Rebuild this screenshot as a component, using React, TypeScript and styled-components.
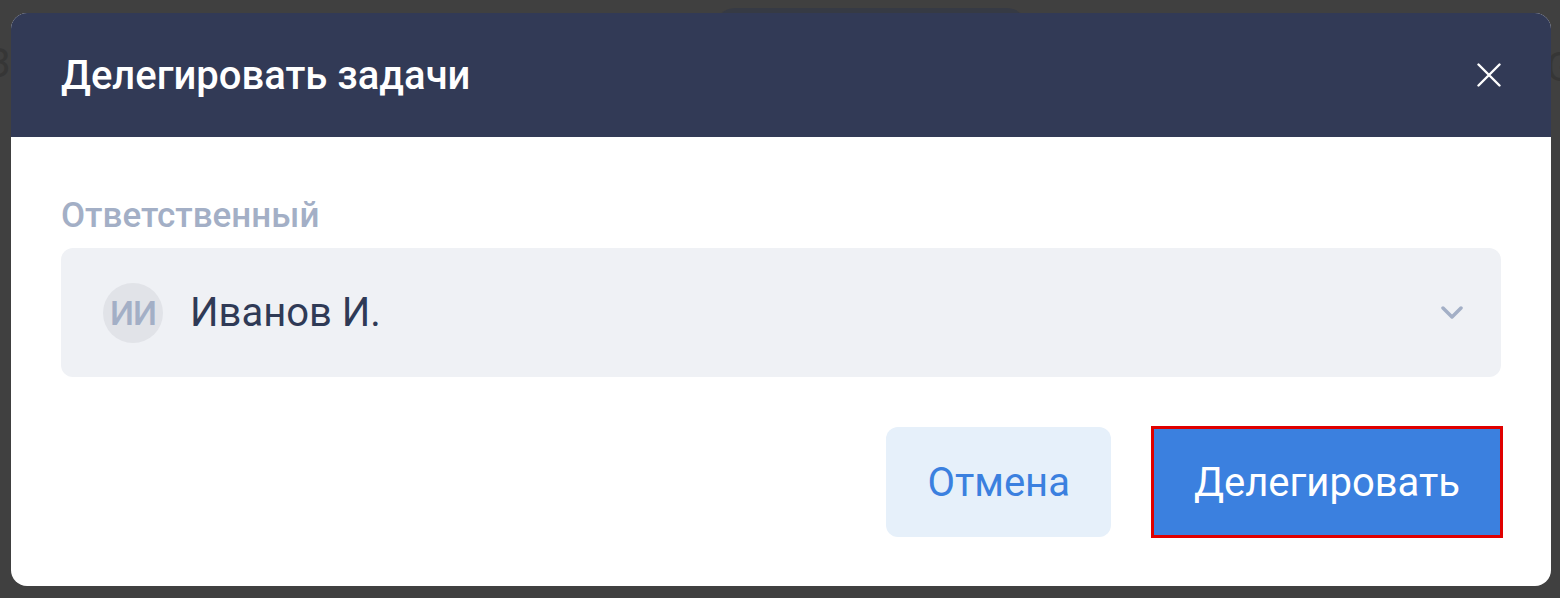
import React from "react";
import styled, { createGlobalStyle } from "styled-components";

const Global = createGlobalStyle`
  html, body { margin: 0; padding: 0; }
  body {
    background: #404040;
    font-family: Roboto, "Noto Sans", "Liberation Sans", sans-serif;
    -webkit-font-smoothing: antialiased;
  }
`;

const Page = styled.div`
  position: relative;
  width: 1560px;
  height: 598px;
  overflow: hidden;
  background: #404040;
`;

const Backdrop = styled.div`
  position: absolute;
  inset: 0;
  pointer-events: none;
`;

const GhostPill = styled.div`
  position: absolute;
  left: 715px;
  top: 8px;
  width: 312px;
  height: 40px;
  border-radius: 20px;
  background: #363a44;
`;

const GhostText = styled.span<{ $left: number; $top: number }>`
  position: absolute;
  left: ${(p) => p.$left}px;
  top: ${(p) => p.$top}px;
  font-size: 40px;
  color: #363636;
  line-height: 1;
`;

const Overlay = styled.div`
  position: absolute;
  inset: 0;
  display: flex;
  align-items: flex-start;
  padding: 13px 0 0 11px;
`;

const Modal = styled.div`
  width: 1540px;
  height: 573px;
  background: #ffffff;
  border-radius: 16px;
  overflow: hidden;
  display: flex;
  flex-direction: column;
`;

const Header = styled.header`
  height: 124px;
  flex-shrink: 0;
  background: #323a56;
  display: flex;
  align-items: center;
  justify-content: space-between;
  padding: 0 42px 0 50px;
  box-sizing: border-box;
`;

const Title = styled.h2`
  margin: 0;
  font-size: 40px;
  font-weight: 500;
  color: #ffffff;
  letter-spacing: 0;
`;

const CloseButton = styled.button`
  width: 40px;
  height: 40px;
  border: none;
  background: transparent;
  padding: 0;
  display: flex;
  align-items: center;
  justify-content: center;
  cursor: pointer;
`;

const Body = styled.div`
  padding: 59px 50px 0 50px;
  display: flex;
  flex-direction: column;
`;

const Label = styled.label`
  font-size: 35px;
  font-weight: 500;
  color: #a3afc6;
  line-height: 40px;
  margin-bottom: 12px;
`;

const Select = styled.div`
  height: 129px;
  border-radius: 12px;
  background: #eff1f5;
  display: flex;
  align-items: center;
  padding: 0 38px 0 42px;
  box-sizing: border-box;
`;

const Avatar = styled.div`
  width: 60px;
  height: 60px;
  border-radius: 50%;
  background: #e1e3e8;
  color: #a3afc6;
  font-size: 34px;
  font-weight: 500;
  letter-spacing: -1px;
  display: flex;
  align-items: center;
  justify-content: center;
  flex-shrink: 0;
`;

const Name = styled.span`
  margin-left: 27px;
  font-size: 40px;
  color: #2f3a56;
  flex: 1;
`;

const Actions = styled.div`
  display: flex;
  justify-content: flex-end;
  gap: 40px;
  margin-top: 49px;
  margin-right: -2px;
`;

const Button = styled.button<{ $primary?: boolean }>`
  height: ${(p) => (p.$primary ? "112px" : "110px")};
  margin-top: ${(p) => (p.$primary ? "0" : "1px")};
  padding: 0 ${(p) => (p.$primary ? "40px" : "41px")};
  font-family: inherit;
  font-size: 40px;
  font-weight: 400;
  border-radius: ${(p) => (p.$primary ? "0" : "12px")};
  border: ${(p) => (p.$primary ? "3px solid #e00000" : "none")};
  background: ${(p) => (p.$primary ? "#3b80df" : "#e6f0fa")};
  color: ${(p) => (p.$primary ? "#ffffff" : "#3b80df")};
  cursor: pointer;
  box-sizing: border-box;
`;

export default function App() {
  return (
    <>
      <Global />
      <Page>
        <Backdrop>
          <GhostPill />
          <GhostText $left={-14} $top={44}>З</GhostText>
          <GhostText $left={1546} $top={48}>G</GhostText>
        </Backdrop>
        <Overlay>
          <Modal role="dialog">
            <Header>
              <Title>Делегировать задачи</Title>
              <CloseButton aria-label="Закрыть">
                <svg width="24" height="24" viewBox="0 0 24 24" fill="none">
                  <path d="M1.5 1.5L22.5 22.5M22.5 1.5L1.5 22.5" stroke="#ffffff" strokeWidth="2.4" strokeLinecap="round" />
                </svg>
              </CloseButton>
            </Header>
            <Body>
              <Label>Ответственный</Label>
              <Select>
                <Avatar>ИИ</Avatar>
                <Name>Иванов И.</Name>
                <svg width="22" height="14" viewBox="0 0 22 14" fill="none">
                  <path d="M2 2L11 11L20 2" stroke="#a3afc6" strokeWidth="3.5" strokeLinecap="round" strokeLinejoin="round" />
                </svg>
              </Select>
              <Actions>
                <Button>Отмена</Button>
                <Button $primary>Делегировать</Button>
              </Actions>
            </Body>
          </Modal>
        </Overlay>
      </Page>
    </>
  );
}
